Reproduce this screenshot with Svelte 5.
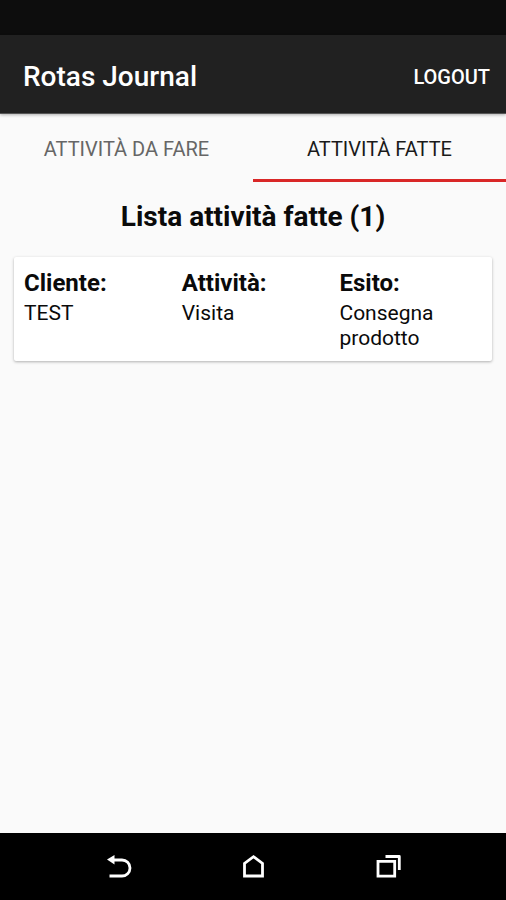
<script>
  let activeTab = 'done';

  const tabs = [
    { id: 'todo', label: 'Attività da fare' },
    { id: 'done', label: 'Attività fatte' }
  ];

  const activities = [
    { cliente: 'TEST', attivita: 'Visita', esito: 'Consegna prodotto' }
  ];
</script>

<div class="screen">
  <div class="status-bar"></div>

  <header>
    <h1>Rotas Journal</h1>
    <button type="button" class="logout">LOGOUT</button>
  </header>

  <div class="tabs" role="tablist">
    {#each tabs as tab}
      <button
        type="button"
        role="tab"
        class="tab"
        class:active={activeTab === tab.id}
        aria-selected={activeTab === tab.id}
        on:click={() => (activeTab = tab.id)}
      >
        {tab.label}
      </button>
    {/each}
  </div>

  <main>
    {#if activeTab === 'done'}
      <h2>Lista attività fatte ({activities.length})</h2>
      {#each activities as activity}
        <dl class="card">
          <div class="field">
            <dt>Cliente:</dt>
            <dd>{activity.cliente}</dd>
          </div>
          <div class="field">
            <dt>Attività:</dt>
            <dd>{activity.attivita}</dd>
          </div>
          <div class="field">
            <dt>Esito:</dt>
            <dd>{activity.esito}</dd>
          </div>
        </dl>
      {/each}
    {/if}
  </main>

  <nav>
    <button type="button" aria-label="Indietro">
      <svg width="28" height="28" viewBox="0 0 28 28">
        <path d="M9 7H18A8 8 0 0 1 18 23H5.500" fill="none" stroke="#fff" stroke-width="2.800" />
        <path d="M3 6.500L10.500 2V11.500Z" fill="#fff" />
      </svg>
    </button>
    <button type="button" aria-label="Home">
      <svg width="28" height="28" viewBox="0 0 28 28">
        <path d="M5.500 23V10.500L14.500 3.700L23.500 10.500V23Z" fill="none" stroke="#fff" stroke-width="2.800" />
      </svg>
    </button>
    <button type="button" aria-label="Recenti">
      <svg width="28" height="28" viewBox="0 0 28 28" fill="none" stroke="#fff">
        <path d="M4 8.300H20.700V23.200H4Z" stroke-width="2.800" />
        <path d="M11.500 3.500H25.300V17" stroke-width="2.800" stroke-linejoin="round" />
      </svg>
    </button>
  </nav>
</div>

<style>
  :global(body) {
    background: #fafafa;
  }

  .screen {
    display: flex;
    flex-direction: column;
    min-height: 100vh;
    background: #fafafa;
    color: #0a0a0a;
    font-family: Roboto, sans-serif;
  }

  button {
    padding: 0;
    border: none;
    background: none;
    font-family: inherit;
    cursor: pointer;
  }

  .status-bar {
    height: 35px;
    background: #0d0d0d;
  }

  header {
    display: flex;
    align-items: center;
    justify-content: space-between;
    height: 72px;
    padding: 6px 16px 0 23px;
    border-bottom: 1px solid #555;
    background: #212121;
    color: #fff;
    box-shadow: 0 1px 3px rgba(0, 0, 0, 0.3);
  }

  h1 {
    margin: 0;
    font-size: 28px;
    font-weight: 500;
    line-height: 32px;
  }

  .logout {
    color: #fff;
    font-size: 20px;
    font-weight: 500;
    line-height: 24px;
  }

  .tabs {
    display: flex;
  }

  .tab {
    flex: 1;
    height: 68px;
    padding-top: 5px;
    border-bottom: 3px solid transparent;
    color: #666;
    font-size: 20px;
    line-height: 24px;
    text-transform: uppercase;
  }

  .tab.active {
    border-bottom-color: #d92727;
    color: #1a1a1a;
  }

  main {
    flex: 1;
    padding: 19px 14px;
  }

  h2 {
    margin: 0 0 24px;
    font-size: 28px;
    font-weight: 700;
    line-height: 32px;
    text-align: center;
  }

  .card {
    display: grid;
    grid-template-columns: 33% 33% 33%;
    margin: 0;
    padding: 11px 0 10px;
    border-radius: 2px;
    background: #fff;
    box-shadow: 0 1px 3px rgba(0, 0, 0, 0.3);
  }

  .field {
    padding-left: 10px;
    padding-right: 30px;
  }

  dt {
    margin-bottom: 3px;
    font-size: 24px;
    font-weight: 700;
    line-height: 30px;
  }

  dd {
    margin: 0;
    font-size: 21px;
    line-height: 25px;
  }

  nav {
    display: flex;
    justify-content: center;
    gap: 107px;
    padding: 20px 0 19px;
    background: #000;
  }

  nav button {
    display: flex;
  }
</style>
